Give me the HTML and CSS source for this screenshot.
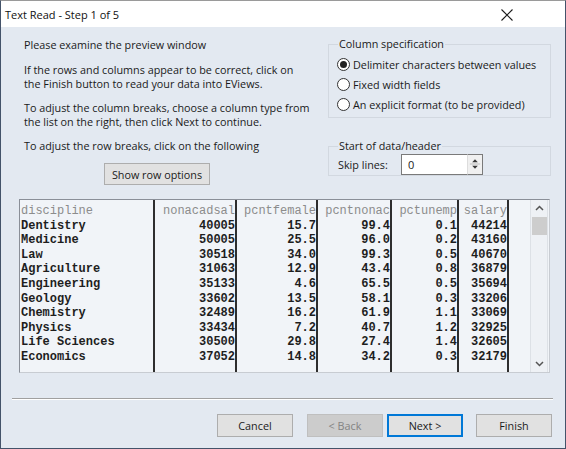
FILE: index.html
```html
<!DOCTYPE html>
<html>
<head>
<meta charset="utf-8">
<link rel="stylesheet" href="styles.css">
</head>
<body>
<div class="window">
  <div class="titlebar">
    <span class="title">Text Read - Step 1 of 5</span>
    <svg class="close" width="12" height="12" viewBox="0 0 12 12"><path d="M0.5 0.5 L11.5 11.5 M11.5 0.5 L0.5 11.5" stroke="#1b1b1b" stroke-width="1.1" fill="none"/></svg>
  </div>
  <div class="content">
    <div class="top">
      <div class="intro">
        <p>Please examine the preview window</p>
        <p>If the rows and columns appear to be correct, click on<br>the Finish button to read your data into EViews.</p>
        <p>To adjust the column breaks, choose a column type from<br>the list on the right, then click Next to continue.</p>
        <p>To adjust the row breaks, click on the following</p>
        <div class="btn-wrap"><span class="btn rowbtn">Show row options</span></div>
      </div>
      <div class="side">
        <fieldset class="group colspec">
          <legend>Column specification</legend>
          <div class="radio"><span class="circle on"></span><span>Delimiter characters between values</span></div>
          <div class="radio"><span class="circle"></span><span>Fixed width fields</span></div>
          <div class="radio"><span class="circle"></span><span>An explicit format (to be provided)</span></div>
        </fieldset>
        <fieldset class="group startgrp">
          <legend>Start of data/header</legend>
          <div class="skip">
            <span class="skip-label">Skip lines:</span>
            <span class="input">0</span>
            <span class="spin">
              <svg width="15" height="18" viewBox="0 0 15 18"><path d="M4.5 7 L7.5 4 L10.5 7 Z" fill="#333"/><path d="M4.5 11 L7.5 14 L10.5 11 Z" fill="#333"/><path d="M2 9 H13" stroke="#b8b8b8" stroke-width="1"/></svg>
            </span>
          </div>
        </fieldset>
      </div>
    </div>

    <div class="preview">
      <div class="col c1 left">
        <div class="hd">discipline</div>
        <div>Dentistry</div><div>Medicine</div><div>Law</div><div>Agriculture</div><div>Engineering</div><div>Geology</div><div>Chemistry</div><div>Physics</div><div>Life Sciences</div><div>Economics</div>
      </div>
      <div class="col c2">
        <div class="hd">nonacadsal</div>
        <div>40005</div><div>50005</div><div>30518</div><div>31063</div><div>35133</div><div>33602</div><div>32489</div><div>33434</div><div>30500</div><div>37052</div>
      </div>
      <div class="col c3">
        <div class="hd">pcntfemale</div>
        <div>15.7</div><div>25.5</div><div>34.0</div><div>12.9</div><div>4.6</div><div>13.5</div><div>16.2</div><div>7.2</div><div>29.8</div><div>14.8</div>
      </div>
      <div class="col c4">
        <div class="hd">pcntnonac</div>
        <div>99.4</div><div>96.0</div><div>99.3</div><div>43.4</div><div>65.5</div><div>58.1</div><div>61.9</div><div>40.7</div><div>27.4</div><div>34.2</div>
      </div>
      <div class="col c5">
        <div class="hd">pctunemp</div>
        <div>0.1</div><div>0.2</div><div>0.5</div><div>0.8</div><div>0.5</div><div>0.3</div><div>1.1</div><div>1.2</div><div>1.4</div><div>0.3</div>
      </div>
      <div class="col c6">
        <div class="hd">salary</div>
        <div>44214</div><div>43160</div><div>40670</div><div>36879</div><div>35694</div><div>33206</div><div>33069</div><div>32925</div><div>32605</div><div>32179</div>
      </div>
      <div class="fill"></div>
      <div class="scrollbar">
        <svg class="arrow" width="15" height="17" viewBox="0 0 15 17"><path d="M4 10 L7.5 6.5 L11 10" stroke="#555" stroke-width="1.5" fill="none"/></svg>
        <div class="thumb"></div>
        <div class="track"></div>
        <svg class="arrow" width="15" height="17" viewBox="0 0 15 17"><path d="M4 7 L7.5 10.5 L11 7" stroke="#555" stroke-width="1.5" fill="none"/></svg>
      </div>
    </div>

    <div class="rule"></div>

    <div class="buttons">
      <span class="btn cancel">Cancel</span>
      <span class="btn back disabled">&lt; Back</span>
      <span class="btn next default">Next &gt;</span>
      <span class="btn finish">Finish</span>
    </div>
  </div>
</div>
</body>
</html>
```

FILE: styles.css
```css
* { box-sizing: border-box; }
html, body { margin: 0; padding: 0; }
body {
  width: 566px;
  height: 449px;
  overflow: hidden;
  font-family: "Open Sans", "Noto Sans", sans-serif;
  font-size: 10.8px;
  color: #1a1a1a;
}
.window {
  width: 566px;
  height: 449px;
  border: 1px solid #44536a;
  border-top-color: #9a9a9a;
  background: #e3e9f1;
  display: flex;
  flex-direction: column;
}
.titlebar {
  height: 26px;
  background: #ffffff;
  display: flex;
  align-items: center;
  justify-content: space-between;
  padding: 0 52px 0 4px;
  flex: none;
}
.title {
  font-size: 11px;
  color: #111;
  margin-top: 1px;
}
.close { margin-top: 2px; }

.content {
  flex: 1;
  padding: 0 12px 0 11px;
  display: flex;
  flex-direction: column;
}
.top {
  display: flex;
  justify-content: space-between;
}
.intro {
  padding: 11px 0 0 12px;
}
.intro p {
  margin: 0 0 10px 0;
  line-height: 14px;
  white-space: nowrap;
}
.intro p:first-child { margin-bottom: 11px; }
.btn-wrap {
  padding-left: 80px;
}
.btn {
  display: inline-flex;
  align-items: center;
  justify-content: center;
  height: 22px;
  background: #e1e1e1;
  border: 1px solid #adadad;
  color: #1a1a1a;
  font-size: 10.8px;
}
.rowbtn { width: 106px; }

.side {
  width: 224px;
  margin-right: 1px;
  padding-top: 10px;
}
.group {
  margin: 0;
  padding: 0;
  border: 1px solid #d2d8e0;
  min-width: 0;
}
.group legend {
  padding: 0 1px;
  line-height: 14px;
}
.colspec { padding: 3px 0 3px 8px; width: 223px; }
.colspec legend { margin-left: 1px; }
.radio {
  display: flex;
  align-items: center;
  height: 20px;
  white-space: nowrap;
  font-size: 10.8px;
}
.circle {
  width: 13px;
  height: 13px;
  border: 1px solid #333;
  border-radius: 50%;
  background: #fff;
  margin-right: 3px;
  position: relative;
  flex: none;
}
.circle.on::after {
  content: "";
  position: absolute;
  left: 2px;
  top: 2px;
  width: 7px;
  height: 7px;
  border-radius: 50%;
  background: #222;
}
.startgrp {
  margin-top: 21px;
  padding: 1px 0 1px 9px;
  width: 223px;
}
.startgrp legend { margin-left: 0; }
.skip {
  display: flex;
  align-items: center;
  height: 20px;
}
.skip-label { width: 63px; }
.input {
  width: 66px;
  height: 21px;
  background: #fff;
  border: 1px solid #7a7a7a;
  border-right: none;
  padding-left: 6px;
  display: flex;
  align-items: center;
  font-size: 11px;
}
.spin {
  width: 16px;
  height: 21px;
  background: #f0f0f0;
  border: 1px solid #7a7a7a;
  border-left: 1px solid #ddd;
  display: flex;
  align-items: center;
  justify-content: center;
}

.preview {
  margin: 14px 0 0 7px;
  width: 531px;
  height: 174px;
  border: 1px solid #8a8f98;
  border-right-color: #c8ccd2;
  border-bottom-color: #c8ccd2;
  background: #f1f4f8;
  display: flex;
  font-family: "Liberation Mono", "Courier New", monospace;
  font-size: 12px;
  color: #1e1e1e;
}
.col {
  border-right: 2px solid #2e2e2e;
  padding-top: 4px;
  text-align: right;
}
.col div { line-height: 14.6px; height: 14.6px; white-space: pre; font-weight: bold; }
.col .hd { color: #8c8c8c; font-weight: normal; }
.col.left { text-align: left; padding-left: 1px; }
.c1 { width: 135px; }
.c2 { width: 82px; }
.c3 { width: 81px; }
.c4 { width: 74px; }
.c5 { width: 67px; }
.c6 { width: 50px; }
.fill { flex: 1; }
.scrollbar {
  width: 18px;
  display: flex;
  flex-direction: column;
  align-items: center;
  background: #eef1f5;
  border-left: 1px solid #dde1e6;
  border-right: 1px solid #dde1e6;
  margin-right: 1px;
}
.arrow { flex: none; }
.thumb {
  width: 15px;
  height: 18px;
  background: #cdcdcd;
  flex: none;
}
.track { flex: 1; }

.rule {
  margin-top: 25px;
  height: 2px;
  border-top: 1px solid #a0a0a0;
  border-bottom: 1px solid #ffffff;
}
.buttons {
  display: flex;
  margin-top: 14px;
  padding-left: 205px;
}
.buttons .btn { width: 76px; height: 23px; }
.back { margin-left: 14px; }
.next { margin-left: 4px; }
.finish { margin-left: 13px; }
.btn.disabled {
  background: #cccccc;
  border-color: #bfbfbf;
  color: #838383;
}
.btn.default {
  border: 2px solid #0078d7;
}
```
